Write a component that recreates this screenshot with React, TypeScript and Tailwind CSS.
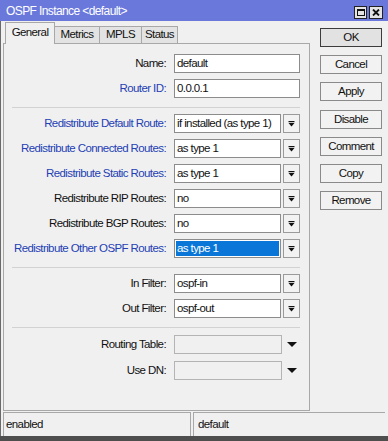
import React from "react";

type RowProps = {
  label: string;
  blue?: boolean;
  value?: string;
  kind: "full" | "drop" | "bare";
  selected?: boolean;
  gap?: string;
};

function DropIcon() {
  return (
    <svg width="7" height="6" viewBox="0 0 7 6">
      <rect x="0.5" y="0" width="6" height="1.2" fill="#111" />
      <path d="M0.5 2 L6.5 2 L3.5 5.6 Z" fill="#111" />
    </svg>
  );
}

function Row({ label, blue, value = "", kind, selected, gap = "mt-[6px]" }: RowProps) {
  return (
    <div className={"flex items-center h-[19px] " + gap}>
      <div
        className={
          "w-[163px] text-right pr-px " + (blue ? "text-[#2440b4]" : "text-[#111]")
        }
      >
        {label}
      </div>
      {kind === "full" && (
        <div className="ml-[7px] w-[126px] h-[19px] bg-white border border-[#8c8c8c] flex items-center pl-[2px]">
          {value}
        </div>
      )}
      {kind === "drop" && (
        <>
          <div className="ml-[7px] w-[107px] h-[19px] bg-white border border-[#8c8c8c] flex items-center p-px">
            {selected ? (
              <div className="flex-1 h-full bg-[#0a77d8] text-white flex items-center pl-px">
                {value}
              </div>
            ) : (
              <span className="pl-px">{value}</span>
            )}
          </div>
          <div className="ml-[2px] w-[17px] h-[19px] bg-[#f2f2f2] border border-[#9a9a9a] flex items-center justify-center">
            <DropIcon />
          </div>
        </>
      )}
      {kind === "bare" && (
        <>
          <div className="ml-[7px] w-[108px] h-[19px] bg-[#f0f0f0] border border-[#b4b4b4]" />
          <svg className="ml-[5px]" width="10" height="5" viewBox="0 0 10 5">
            <path d="M0 0 L10 0 L5 5 Z" fill="#111" />
          </svg>
        </>
      )}
    </div>
  );
}

function Sep() {
  return <div className="mt-[9px] ml-[8px] w-[288px] h-px bg-[#d2d2d2]" />;
}

function Btn({ children, ok, extra = "" }: { children: React.ReactNode; ok?: boolean; extra?: string }) {
  return (
    <div
      className={
        "h-[19px] flex items-center justify-center border " +
        (ok ? "border-[#3c3c3c] bg-[#e2e2e2]" : "border-[#8a8a8a] bg-[#f2f2f2]") +
        " " +
        extra
      }
    >
      {children}
    </div>
  );
}

export default function App() {
  return (
    <div className="w-[388px] h-[441px] bg-[#f0f0f0] flex flex-col overflow-hidden font-['Liberation_Sans',Arial,sans-serif] text-[11.5px] tracking-[-0.6px] text-[#111] leading-none">
      {/* title bar */}
      <div className="h-[21px] shrink-0 bg-[#6a78dc] flex items-center justify-between pl-[6px] pr-[5px]">
        <span className="text-white text-[12px]">OSPF Instance &lt;default&gt;</span>
        <div className="flex gap-[2px] mt-[3px]">
          <div className="w-[13px] h-[13px] bg-[#e4e4e4] border border-[#222] flex items-center justify-center">
            <div className="w-[8px] h-[7px] border border-[#111] border-t-2" />
          </div>
          <div className="w-[14px] h-[13px] bg-[#e4e4e4] border border-[#222] flex items-center justify-center">
            <svg width="8" height="7" viewBox="0 0 8 7">
              <path d="M1 0.5 L7 6.5 M7 0.5 L1 6.5" stroke="#111" strokeWidth="1.8" />
            </svg>
          </div>
        </div>
      </div>

      <div className="flex-1 flex flex-col border-l border-[#6a6a6a]">
        <div className="flex">
          {/* tabs + panel */}
          <div className="ml-[2px] w-[307px] flex flex-col">
            <div className="h-[22px] flex items-end pl-[2px]">
              <div className="relative z-10 -mb-px h-[22px] w-[50px] bg-[#f0f0f0] border border-b-0 border-[#a8a8a8] flex items-center justify-center pb-[2px]">
                General
              </div>
              <div className="h-[17px] w-[45px] bg-[#e3e3e3] border border-l-0 border-b-0 border-[#a8a8a8] flex items-center justify-center">
                Metrics
              </div>
              <div className="h-[17px] w-[42px] bg-[#e3e3e3] border border-l-0 border-b-0 border-[#a8a8a8] flex items-center justify-center">
                MPLS
              </div>
              <div className="h-[17px] w-[36px] bg-[#e3e3e3] border border-l-0 border-b-0 border-[#a8a8a8] flex items-center justify-center">
                Status
              </div>
            </div>
            <div className="h-[368px] border border-[#a8a8a8] pt-[10px] flex flex-col">
              <Row label="Name:" value="default" kind="full" gap="" />
              <Row label="Router ID:" blue value="0.0.0.1" kind="full" />
              <Sep />
              <Row label="Redistribute Default Route:" blue value="if installed (as type 1)" kind="drop" />
              <Row label="Redistribute Connected Routes:" blue value="as type 1" kind="drop" />
              <Row label="Redistribute Static Routes:" blue value="as type 1" kind="drop" />
              <Row label="Redistribute RIP Routes:" value="no" kind="drop" />
              <Row label="Redistribute BGP Routes:" value="no" kind="drop" />
              <Row label="Redistribute Other OSPF Routes:" blue value="as type 1" kind="drop" selected />
              <Sep />
              <Row label="In Filter:" value="ospf-in" kind="drop" />
              <Row label="Out Filter:" value="ospf-out" kind="drop" />
              <Sep />
              <Row label="Routing Table:" kind="bare" gap="mt-[7px]" />
              <Row label="Use DN:" kind="bare" gap="mt-[7px]" />
            </div>
          </div>

          {/* buttons */}
          <div className="ml-[10px] w-[62px] pt-[7px] flex flex-col gap-[8px]">
            <Btn ok>OK</Btn>
            <Btn>Cancel</Btn>
            <Btn>Apply</Btn>
            <Btn extra="mt-[1px]">Disable</Btn>
            <Btn>Comment</Btn>
            <Btn>Copy</Btn>
            <Btn>Remove</Btn>
          </div>
        </div>

        {/* status bar */}
        <div className="mt-[1px] h-[24px] flex">
          <div className="ml-[2px] w-[188px] border-t border-l border-r border-[#a8a8a8] flex items-center pl-[2px]">
            enabled
          </div>
          <div className="ml-[2px] w-[192px] border-t border-l border-[#a8a8a8] flex items-center pl-[4px]">
            default
          </div>
        </div>
      </div>
      <div className="h-[5px] shrink-0 bg-[#4e4e4e]" />
    </div>
  );
}
